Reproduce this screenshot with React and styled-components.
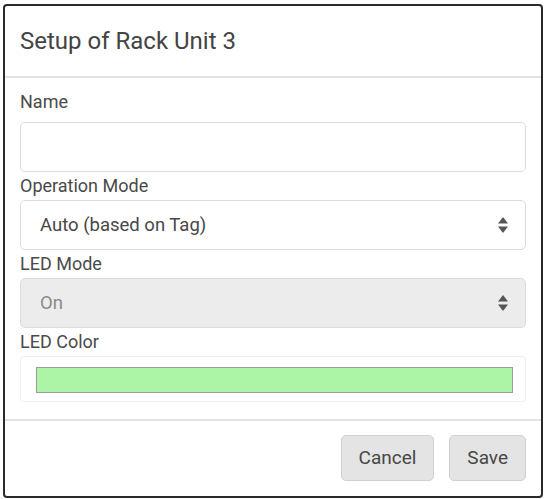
import React from 'react';
import styled, { createGlobalStyle } from 'styled-components';

const GlobalStyle = createGlobalStyle`
  html, body {
    margin: 0;
    padding: 0;
    background: #ffffff;
  }
  body {
    font-family: 'Roboto', 'Liberation Sans', sans-serif;
    color: #444444;
  }
`;

const Frame = styled.div`
  box-sizing: border-box;
  margin: 4px 0 0 3px;
  width: 540px;
  height: 494px;
  border: 2px solid #2a2a2a;
  border-radius: 4px;
  background: #ffffff;
  display: flex;
  flex-direction: column;
`;

const Header = styled.div`
  height: 70px;
  padding: 0 15px;
  display: flex;
  align-items: center;
  border-bottom: 2px solid #e2e2e2;
`;

const Title = styled.h1`
  margin: 0;
  font-size: 24px;
  font-weight: 400;
  color: #444444;
`;

const Body = styled.div`
  padding: 10px 15px 17px 15px;
  display: flex;
  flex-direction: column;
  border-bottom: 2px solid #e2e2e2;
`;

const Label = styled.label`
  display: block;
  height: 28px;
  line-height: 28px;
  font-size: 18px;
  color: #4a4a4a;
  margin-bottom: ${(p) => (p.$first ? '6px' : '0')};
`;

const TextInput = styled.input`
  box-sizing: border-box;
  width: 100%;
  height: 50px;
  border: 1px solid #dcdcdc;
  border-radius: 5px;
  background: #ffffff;
  outline: none;
  padding: 0 19px;
  font-family: inherit;
  font-size: 18.5px;
`;

const SelectBox = styled.div`
  box-sizing: border-box;
  height: 50px;
  border: 1px solid #dcdcdc;
  border-radius: 5px;
  background: ${(p) => (p.$disabled ? '#ececec' : '#ffffff')};
  color: ${(p) => (p.$disabled ? '#8a8a8a' : '#474747')};
  display: flex;
  align-items: center;
  justify-content: space-between;
  padding: 0 16px 0 19px;
  font-size: 18.5px;
`;

const Arrows = () => (
  <svg width="12" height="18" viewBox="0 0 12 18">
    <path d="M6 1 L11 7.5 L1 7.5 Z" fill="#555555" />
    <path d="M6 17 L11 10.5 L1 10.5 Z" fill="#555555" />
  </svg>
);

const ColorBox = styled.div`
  box-sizing: border-box;
  height: 46px;
  border: 1px solid #f0f0f0;
  border-radius: 4px;
  padding: 10px 12px 8px 15px;
`;

const Swatch = styled.div`
  box-sizing: border-box;
  height: 26px;
  background: ${(p) => p.$color};
  border: 1px solid #9c9c9c;
`;

const Footer = styled.div`
  flex: 1;
  display: flex;
  justify-content: flex-end;
  align-items: center;
  gap: 15px;
  padding: 0 15px 2px 0;
`;

const Button = styled.button`
  box-sizing: border-box;
  height: 46px;
  padding: 0 17px;
  border: 1px solid #d0d0d0;
  border-radius: 5px;
  background: #e4e4e4;
  color: #474747;
  font-family: inherit;
  font-size: 19px;
`;

const App = () => (
  <>
    <GlobalStyle />
    <Frame>
      <Header>
        <Title>Setup of Rack Unit 3</Title>
      </Header>
      <Body>
        <Label $first>Name</Label>
        <TextInput type="text" />
        <Label>Operation Mode</Label>
        <SelectBox>
          <span>Auto (based on Tag)</span>
          <Arrows />
        </SelectBox>
        <Label>LED Mode</Label>
        <SelectBox $disabled>
          <span>On</span>
          <Arrows />
        </SelectBox>
        <Label>LED Color</Label>
        <ColorBox>
          <Swatch $color="#acf5a6" />
        </ColorBox>
      </Body>
      <Footer>
        <Button>Cancel</Button>
        <Button>Save</Button>
      </Footer>
    </Frame>
  </>
);

export default App;
